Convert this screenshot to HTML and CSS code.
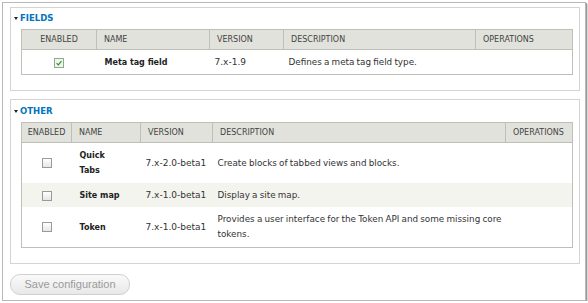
FILE: index.html
```html
<!DOCTYPE html>
<html>
<head>
<meta charset="utf-8">
<link rel="stylesheet" href="styles.css">
</head>
<body>
<div class="page">
  <div class="fieldset">
    <div class="legend"><span class="tri"></span>FIELDS</div>
    <table class="grid">
      <colgroup><col style="width:75px"><col style="width:113px"><col style="width:74px"><col style="width:192px"><col style="width:97px"></colgroup>
      <thead><tr><th class="c">ENABLED</th><th>NAME</th><th>VERSION</th><th>DESCRIPTION</th><th>OPERATIONS</th></tr></thead>
      <tbody>
        <tr class="odd"><td class="c"><span class="cb checked"><svg viewBox="0 0 10 10" width="8" height="8"><path d="M2 5.2 L4.2 7.4 L8 2.6" fill="none" stroke="#2f8a2f" stroke-width="1.4"/></svg></span></td><td class="name">Meta tag field</td><td class="ver">7.x-1.9</td><td class="desc">Defines a meta tag field type.</td><td></td></tr>
      </tbody>
    </table>
  </div>
  <div class="fieldset second">
    <div class="legend"><span class="tri"></span>OTHER</div>
    <table class="grid">
      <colgroup><col style="width:50px"><col style="width:69px"><col style="width:72px"><col style="width:293px"><col style="width:67px"></colgroup>
      <thead><tr><th class="c">ENABLED</th><th>NAME</th><th>VERSION</th><th>DESCRIPTION</th><th>OPERATIONS</th></tr></thead>
      <tbody>
        <tr class="odd tall"><td class="c"><span class="cb"></span></td><td class="name">Quick<br>Tabs</td><td class="ver">7.x-2.0-beta1</td><td class="desc">Create blocks of tabbed views and blocks.</td><td></td></tr>
        <tr class="even"><td class="c"><span class="cb"></span></td><td class="name">Site map</td><td class="ver">7.x-1.0-beta1</td><td class="desc">Display a site map.</td><td></td></tr>
        <tr class="odd tall"><td class="c"><span class="cb"></span></td><td class="name">Token</td><td class="ver">7.x-1.0-beta1</td><td class="desc">Provides a user interface for the Token API and some missing core tokens.</td><td></td></tr>
      </tbody>
    </table>
  </div>
  <div class="actions"><span class="btn">Save configuration</span></div>
</div>
</body>
</html>
```
FILE: styles.css
```css
html, body { margin: 0; padding: 0; background: #fff; }
body { font-family: "DejaVu Sans", Verdana, sans-serif; color: #333; }
.page {
  box-sizing: border-box;
  margin: 2px 0 0 2px;
  width: 584px;
  height: 299px;
  border: 1px solid #b8b8b8;
  box-shadow: 1px 1px 0 #9a9a9a, 2px 2px 0 #d8d8d8;
  padding: 4px 0 0 7px;
}
.fieldset {
  box-sizing: border-box;
  width: 570px;
  border: 1px solid #d4d4d0;
  padding: 0 6px 15px 10px;
}
.fieldset.second { margin-top: 8px; }
.legend {
  height: 21px;
  line-height: 21px;
  margin-left: -7px;
  font-size: 8.5px;
  font-weight: bold;
  color: #0074bd;
  display: flex;
  align-items: center;
}
.second .legend { height: 22px; }
.tri {
  width: 0; height: 0;
  border-left: 2.5px solid transparent;
  border-right: 2.5px solid transparent;
  border-top: 3px solid #222;
  margin: 0 2px 0 0;
}
.grid {
  width: 551px;
  table-layout: fixed;
  border-collapse: collapse;
  border: 1px solid #bebfb9;
}
.grid th {
  background: #e1e2dc;
  border: 1px solid #bfbfba;
  border-top: 0;
  font-weight: normal;
  font-size: 8px;
  color: #444;
  text-align: left;
  padding: 3px 7px;
  line-height: 13px;
  height: 13px;
  white-space: nowrap;
  overflow: hidden;
}
.grid th.c, .grid td.c { text-align: center; padding-left: 0; padding-right: 0; }
.grid td {
  font-size: 9px;
  line-height: 15px;
  padding: 5px 3px 4px 6px;
  vertical-align: middle;
  color: #333;
}
.grid td.ver { white-space: nowrap; padding-left: 5px; }
.grid td.desc { font-size: 8.8px; word-spacing: -0.6px; padding-right: 1px; padding-left: 5px; }
.grid td.name { font-weight: bold; font-size: 8px; color: #222; padding-left: 8px; }
.grid tr.even td { background: #f3f4ee; }
.grid tr.tall td { padding-top: 5px; padding-bottom: 5px; }
.cb {
  display: inline-block;
  box-sizing: border-box;
  width: 10px; height: 10px;
  border: 1px solid #9a9a9a;
  background: linear-gradient(#fff, #e6e6e6);
  vertical-align: middle;
}
.cb.checked { border-color: #8faa8f; background: #eef6ea; }
.cb svg { display: block; margin: 0; }
.actions { padding-top: 9px; }
.btn {
  box-sizing: border-box;
  display: inline-flex;
  align-items: center;
  justify-content: center;
  width: 120px;
  height: 21px;
  border: 1px solid #d0d0d0;
  border-radius: 10px;
  background: linear-gradient(#fafafa, #e8e8e8);
  font-family: "Liberation Sans", Arial, sans-serif;
  font-size: 11px;
  color: #9a9a9a;
}
```
